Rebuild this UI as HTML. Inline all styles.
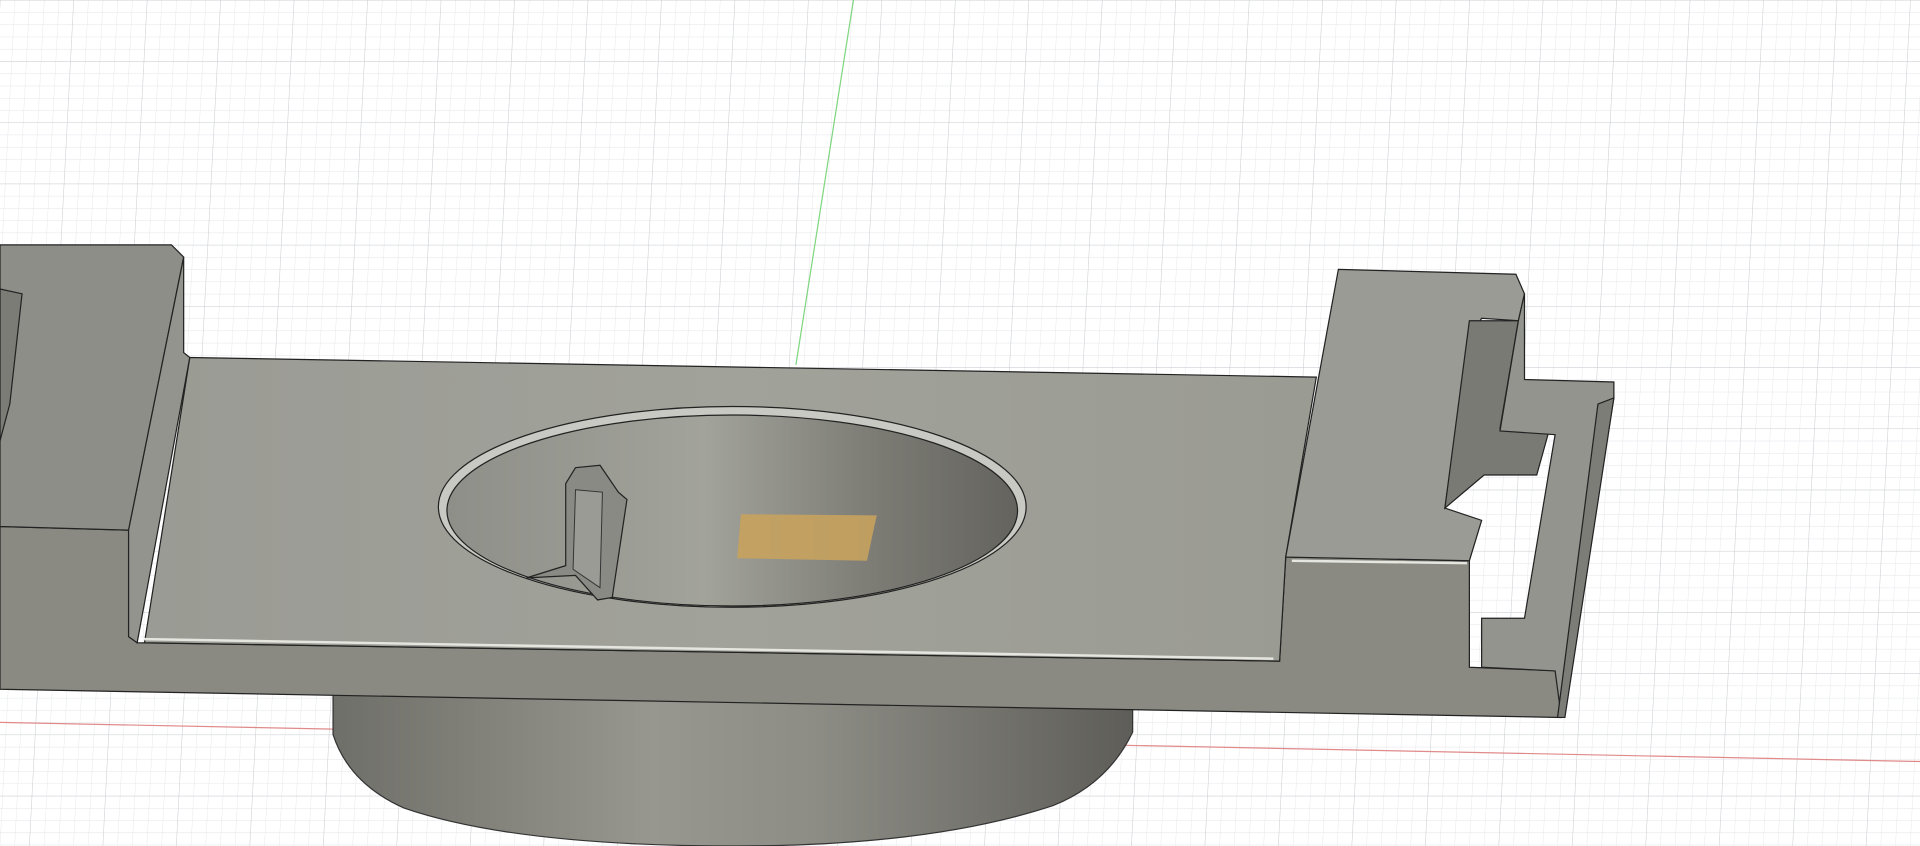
<!DOCTYPE html>
<html><head><meta charset="utf-8"><style>
html,body{margin:0;padding:0;width:1920px;height:846px;overflow:hidden;background:#fff}
svg{display:block}
</style></head><body>
<svg width="1920" height="846" viewBox="0 0 1568 691" preserveAspectRatio="none" xmlns="http://www.w3.org/2000/svg">
<defs>
<pattern id="g" width="12" height="10" patternUnits="userSpaceOnUse" patternTransform="skewX(-3)">
<path d="M0 0H12M0 0V10" stroke="#e3e5e8" stroke-width="0.7" fill="none"/>
</pattern>
<pattern id="g2" width="60" height="50" patternUnits="userSpaceOnUse" patternTransform="skewX(-3)">
<path d="M0 0H60M0 0V50" stroke="#cdd0d4" stroke-width="0.8" fill="none"/>
</pattern>
<linearGradient id="hole" x1="0" x2="1">
<stop offset="0" stop-color="#8e8f88"/><stop offset="0.45" stop-color="#a2a39b"/><stop offset="0.75" stop-color="#7c7c75"/><stop offset="1" stop-color="#64635e"/>
</linearGradient>
<linearGradient id="cyl" x1="0" x2="1">
<stop offset="0" stop-color="#6f6f69"/><stop offset="0.4" stop-color="#97978f"/><stop offset="0.6" stop-color="#8d8d86"/><stop offset="1" stop-color="#5e5d58"/>
</linearGradient>
<linearGradient id="top" x1="0" x2="1">
<stop offset="0" stop-color="#9a9b94"/><stop offset="0.5" stop-color="#a1a29a"/><stop offset="1" stop-color="#9a9b93"/>
</linearGradient>
</defs>
<rect width="1568" height="691" fill="#fff"/>
<rect width="1568" height="691" fill="url(#g)"/>
<rect width="1568" height="691" fill="url(#g2)"/>
<line x1="697" y1="0" x2="650" y2="298" stroke="#7fd67f" stroke-width="1"/>
<line x1="0" y1="590" x2="1568" y2="622" stroke="#e08a8a" stroke-width="1"/>
<!-- cylinder -->
<path d="M272 560 L925 575 L925 598 Q905 640 860 658 Q760 691 600 691 Q420 691 330 660 Q285 640 272 600 Z" fill="url(#cyl)" stroke="#333" stroke-width="1"/>
<!-- plate front face -->
<path d="M0 430 L105 433 L112 525 L1045 540 L1050 455 L1200 458 L1200 545 L1275 548 L1275 586 L0 563 Z" fill="#8a8a83" stroke="#222" stroke-width="1"/>
<!-- left block top/side -->
<path d="M0 200 L140 200 L150 210 L105 433 L0 430 Z" fill="#8d8e87" stroke="#222" stroke-width="1"/>
<path d="M150 210 L150 288 L155 292 L112 525 L105 520 L105 433 Z" fill="#93948d" stroke="#222" stroke-width="1"/>
<path d="M0 236 L18 240 L8 330 L0 360 Z" fill="#7c7c76" stroke="#222" stroke-width="1"/>
<!-- plate top -->
<path d="M155 292 L1075 308 L1050 455 L1045 540 L118 525 Z" fill="url(#top)" stroke="#222" stroke-width="1"/>
<path d="M118 522 L1040 538" stroke="#e6e6e0" stroke-width="2"/>
<!-- hole -->
<ellipse cx="598" cy="414" rx="240" ry="82" fill="#c9c9c3" stroke="#222" stroke-width="1"/>
<ellipse cx="598" cy="417" rx="233" ry="78" fill="url(#hole)" stroke="#222" stroke-width="1"/>
<!-- post in hole -->
<path d="M462 395 L470 382 L490 380 L505 402 L512 408 L500 488 L488 490 L470 470 L430 472 L462 462 Z" fill="#8a8a84" stroke="#222" stroke-width="1"/>
<path d="M470 400 L492 402 L490 480 L468 465 Z" fill="#9b9b95" stroke="#333" stroke-width="0.8"/>
<!-- orange -->
<path d="M605 420 L716 421 L708 458 L602 456 Z" fill="#c7a25e" opacity="0.9"/>
<!-- right block -->
<path d="M1093 220 L1238 224 L1245 240 L1240 262 L1210 260 L1200 275 L1180 415 L1210 425 L1200 458 L1050 455 Z" fill="#9a9b94" stroke="#222" stroke-width="1"/>
<path d="M1200 262 L1240 262 L1225 350 L1265 352 L1255 388 L1212 388 L1180 415 Z" fill="#7a7a74" stroke="#222" stroke-width="1"/>
<path d="M1240 262 L1245 240 L1245 310 L1318 312 L1318 325 L1275 585 L1270 548 L1210 545 L1210 505 L1245 505 L1270 355 L1225 352 Z" fill="#93948d" stroke="#222" stroke-width="1"/>
<path d="M1318 325 L1278 586 L1272 586 L1305 330 Z" fill="#7d7d77" stroke="#222" stroke-width="1"/>
<path d="M1055 458 L1198 460" stroke="#e6e6e0" stroke-width="2"/>
</svg>
</body></html>
